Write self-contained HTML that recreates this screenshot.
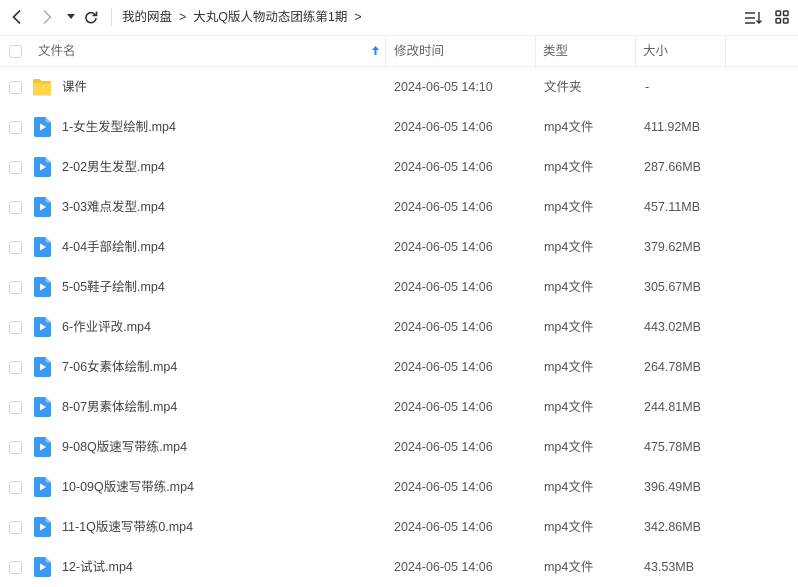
<!DOCTYPE html>
<html><head><meta charset="utf-8"><style>
*{margin:0;padding:0;box-sizing:border-box}
body{width:798px;height:587px;overflow:hidden;background:#fff;font-family:"Liberation Sans","Noto Sans CJK SC",sans-serif;color:#333;position:relative}
.t{position:absolute;font-size:12.5px;white-space:nowrap;line-height:16px}
.hd{color:#666}
.cb{position:absolute;left:9px;width:13px;height:13px;border:1px solid #d4d4d4;border-radius:3px;background:#fff}
.sep{position:absolute;top:36px;width:1px;height:31px;background:#eaeaea}
.row{color:#444}
.g{color:#555}
</style></head><body>
<!-- toolbar -->
<svg style="position:absolute;left:10px;top:9px" width="14" height="16" viewBox="0 0 14 16"><path d="M10 1.5L3.5 8l6.5 6.5" fill="none" stroke="#333" stroke-width="1.6"/></svg>
<svg style="position:absolute;left:40px;top:9px" width="14" height="16" viewBox="0 0 14 16"><path d="M4 1.5L10.5 8 4 14.5" fill="none" stroke="#aaa" stroke-width="1.4"/></svg>
<svg style="position:absolute;left:67px;top:14px" width="8" height="6" viewBox="0 0 8 6"><path d="M0 0h8L4 5z" fill="#333"/></svg>
<svg style="position:absolute;left:84px;top:10px" width="14" height="14" viewBox="0 0 14 14"><path d="M11.5 5.5A5 5 0 1 0 12 8" fill="none" stroke="#333" stroke-width="1.6"/><path d="M8.5 5.5h4v-4" fill="none" stroke="#333" stroke-width="1.6"/></svg>
<div style="position:absolute;left:111px;top:8px;width:1px;height:18px;background:#ddd"></div>
<div class="t" style="left:122px;top:9px;color:#333">我的网盘 &nbsp;<b style="font-weight:normal">&gt;</b>&nbsp; 大丸Q版人物动态团练第1期 &nbsp;&gt;</div>
<svg style="position:absolute;left:745px;top:11px" width="18" height="14" viewBox="0 0 18 14"><path d="M0 2h10M0 7h10M0 12h10M14 1v11M11.5 9.5L14 12l2.5-2.5" fill="none" stroke="#333" stroke-width="1.4"/></svg>
<svg style="position:absolute;left:775px;top:10px" width="14" height="14" viewBox="0 0 14 14"><g fill="none" stroke="#333" stroke-width="1.5"><rect x="1" y="1" width="4.5" height="4.5" rx="1"/><rect x="8.5" y="1" width="4.5" height="4.5" rx="1"/><rect x="1" y="8.5" width="4.5" height="4.5" rx="1"/><rect x="8.5" y="8.5" width="4.5" height="4.5" rx="1"/></g></svg>
<!-- header -->
<div style="position:absolute;left:0;top:35px;width:798px;height:1px;background:#eee"></div>
<div style="position:absolute;left:0;top:66px;width:798px;height:1px;background:#eee"></div>
<div class="cb" style="top:45px"></div>
<div class="t hd" style="left:38px;top:43px">文件名</div>
<svg style="position:absolute;left:372px;top:46px" width="7" height="9" viewBox="0 0 7 9"><path d="M3.5 0L7 4H4.5v5h-2V4H0z" fill="#2a8ae6"/></svg>
<div class="sep" style="left:385px"></div><div class="sep" style="left:535px"></div><div class="sep" style="left:635px"></div><div class="sep" style="left:725px"></div>
<div class="t hd" style="left:394px;top:43px">修改时间</div>
<div class="t hd" style="left:543px;top:43px">类型</div>
<div class="t hd" style="left:643px;top:43px">大小</div>
<!-- folder row -->
<div class="cb" style="top:81px"></div>
<svg style="position:absolute;left:32px;top:77px" width="20" height="20" viewBox="0 0 20 20"><path d="M1 3.5a1.5 1.5 0 0 1 1.5-1.5h5l2 2h8a1.5 1.5 0 0 1 1.5 1.5V17a1.5 1.5 0 0 1-1.5 1.5h-15A1.5 1.5 0 0 1 1 17z" fill="#f7c433"/><path d="M1 6.5h18V17a1.5 1.5 0 0 1-1.5 1.5h-15A1.5 1.5 0 0 1 1 17z" fill="#fdd64c"/></svg>
<div class="t row" style="left:62px;top:79px">课件</div>
<div class="t g" style="left:394px;top:79px">2024-06-05 14:10</div>
<div class="t g" style="left:544px;top:79px">文件夹</div>
<div class="t g" style="left:645px;top:79px">-</div>
<div id="rows"></div>
<script>
var d=[["1-女生发型绘制.mp4","411.92MB"],["2-02男生发型.mp4","287.66MB"],["3-03难点发型.mp4","457.11MB"],["4-04手部绘制.mp4","379.62MB"],["5-05鞋子绘制.mp4","305.67MB"],["6-作业评改.mp4","443.02MB"],["7-06女素体绘制.mp4","264.78MB"],["8-07男素体绘制.mp4","244.81MB"],["9-08Q版速写带练.mp4","475.78MB"],["10-09Q版速写带练.mp4","396.49MB"],["11-1Q版速写带练0.mp4","342.86MB"],["12-试试.mp4","43.53MB"]];
var h="";d.forEach(function(r,i){var y=127+i*40;
h+='<div class="cb" style="top:'+(y-6)+'px"></div>';
h+='<svg style="position:absolute;left:34px;top:'+(y-10)+'px" width="17" height="20" viewBox="0 0 17 20"><path d="M2 0h9.5L17 5.5V18a2 2 0 0 1-2 2H2a2 2 0 0 1-2-2V2a2 2 0 0 1 2-2z" fill="#3d9af2"/><path d="M11.5 0L17 5.5h-4a1.5 1.5 0 0 1-1.5-1.5z" fill="#8cc4f8"/><path d="M6 6.5l6 3.5-6 3.5z" fill="#fff"/></svg>';
h+='<div class="t row" style="left:62px;top:'+(y-8)+'px">'+r[0]+'</div>';
h+='<div class="t g" style="left:394px;top:'+(y-8)+'px">2024-06-05 14:06</div>';
h+='<div class="t g" style="left:544px;top:'+(y-8)+'px">mp4文件</div>';
h+='<div class="t g" style="left:644px;top:'+(y-8)+'px">'+r[1]+'</div>';});
document.getElementById("rows").innerHTML=h;
</script>
</body></html>
